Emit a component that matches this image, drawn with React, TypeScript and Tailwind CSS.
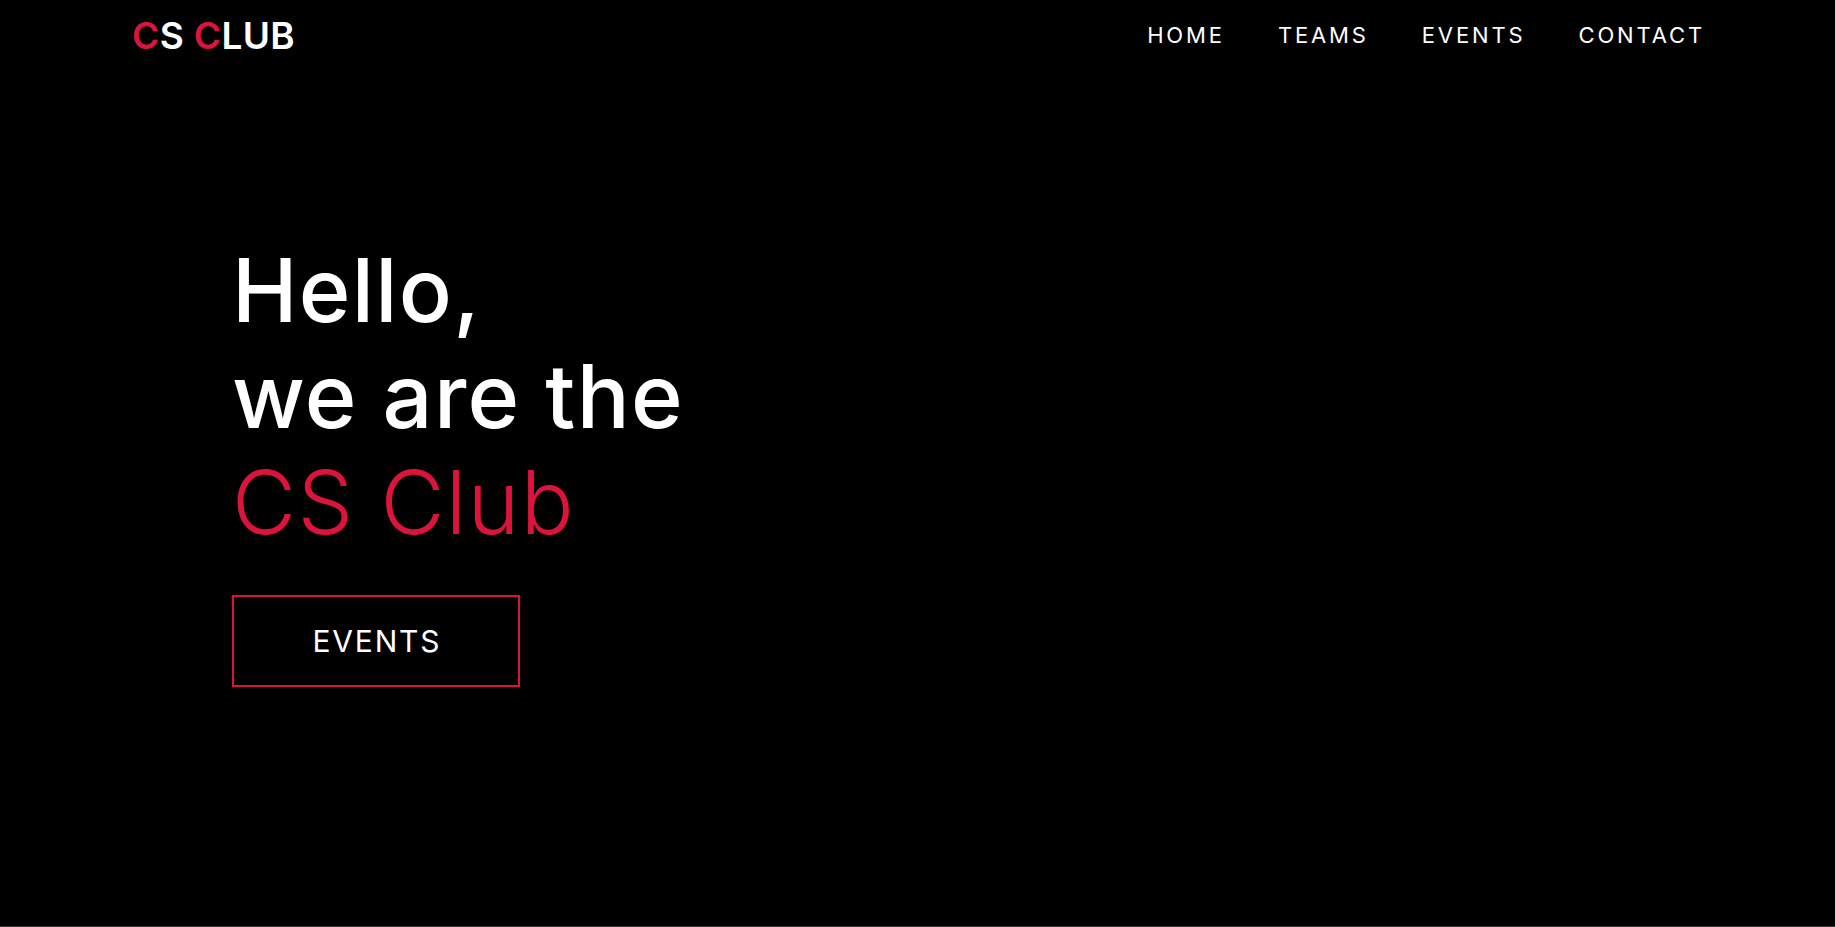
import React from "react";

export default function App() {
  const font = { fontFamily: "Inter, 'Open Sans', sans-serif" };
  return (
    <div className="w-[1835px] h-[927px] bg-black text-white overflow-hidden flex flex-col border-b border-[#3a3a3a]" style={font}>
      <header className="flex items-center justify-between pl-[132px] pr-[130px] h-[70px]">
        <div className="text-[37px] font-semibold tracking-[0.01em] leading-none">
          <span className="text-[#dc143c]">C</span>S <span className="text-[#dc143c]">C</span>LUB
        </div>
        <nav className="flex items-center gap-[53px] text-[22px] tracking-[0.13em] font-normal">
          <a>HOME</a>
          <a>TEAMS</a>
          <a>EVENTS</a>
          <a>CONTACT</a>
        </nav>
      </header>
      <main className="flex-1 pl-[232px] pt-[167px]">
        <h1 className="text-[88px] leading-[106px] font-medium tracking-[0.015em]">
          <div>Hello,</div>
          <div>we are the</div>
          <div className="text-[#dc143c] font-light">CS Club</div>
        </h1>
        <button className="mt-[40px] w-[288px] h-[92px] border-2 border-[#dc143c] text-[30px] font-normal tracking-[0.06em] flex items-center justify-center">
          <span className="pl-[0.06em]">EVENTS</span>
        </button>
      </main>
    </div>
  );
}
